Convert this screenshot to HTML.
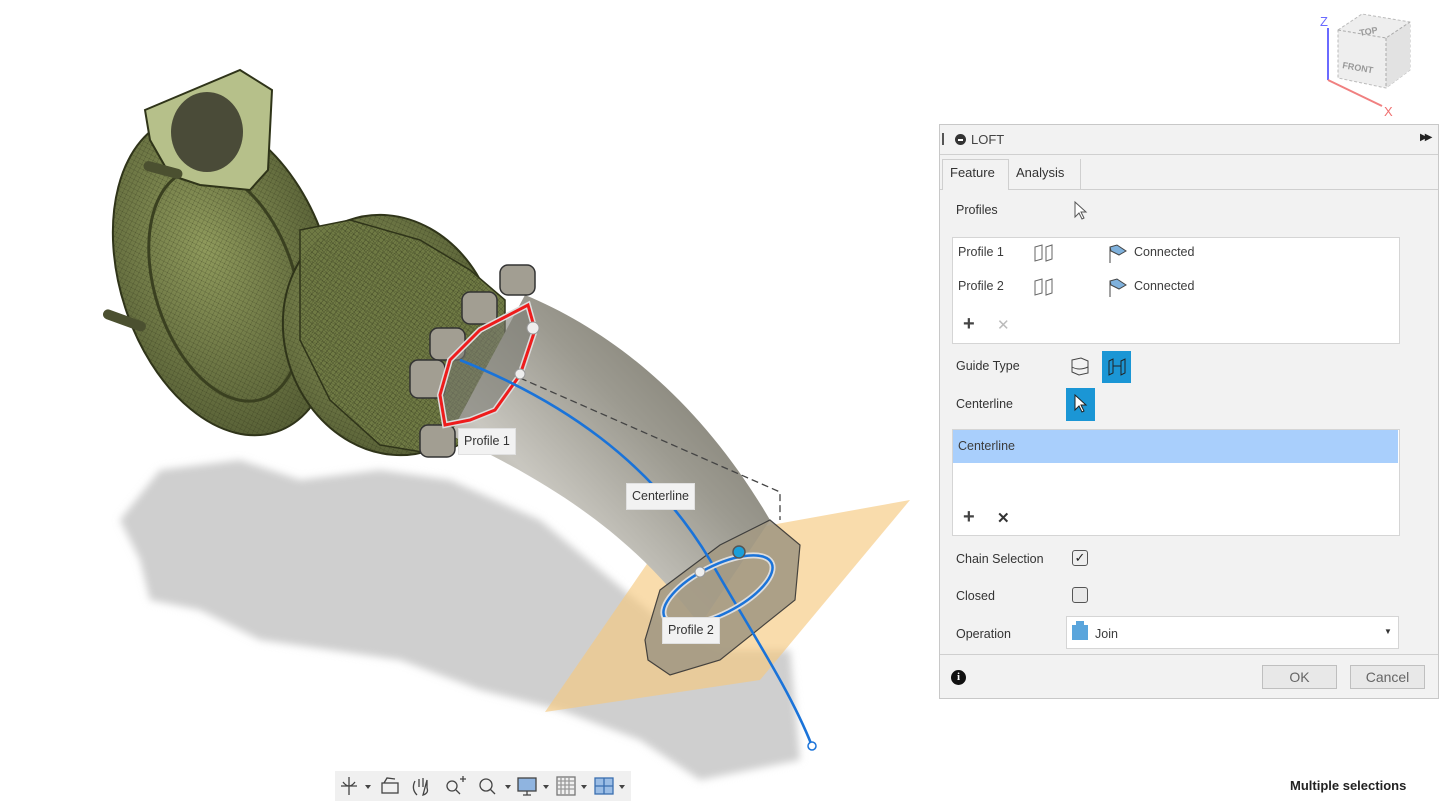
<!DOCTYPE html>
<html><head><style>
*{margin:0;padding:0;box-sizing:border-box}
body{width:1444px;height:803px;background:#fff;position:relative;overflow:hidden;font-family:"Liberation Sans",Arial,sans-serif;font-size:12.5px;color:#3c3c3c}
.abs{position:absolute}
.lbl{position:absolute;background:#f2f2f2;border:1px solid #e0e0e0;font-size:12.5px;color:#333;padding:5px 5px;line-height:15px}
#panel{position:absolute;left:939px;top:124px;width:500px;height:575px;background:#f2f2f2;border:1px solid #c8c8c8}
.row{position:absolute;left:16px;font-size:12.5px;color:#333}
.box{position:absolute;background:#fff;border:1px solid #d5d5d5}
.btn{position:absolute;border:1px solid #bfbfbf;background:#e8e8e8;font-size:14px;color:#666;text-align:center;line-height:22px}
.bl{position:absolute;background:#1b96d5;}
</style></head><body>
<svg class="abs" style="left:0;top:0" width="940" height="803" viewBox="0 0 940 803">
<defs>
<linearGradient id="pg" x1="0" y1="1" x2="1" y2="0">
<stop offset="0" stop-color="#7a776a"/><stop offset="0.35" stop-color="#c9c7c0"/><stop offset="0.6" stop-color="#9c9a90"/><stop offset="1" stop-color="#6a675b"/>
</linearGradient>
<radialGradient id="tg" cx="0.45" cy="0.4" r="0.7"><stop offset="0" stop-color="#8f9a5c"/><stop offset="1" stop-color="#4f5730"/></radialGradient>
<pattern id="mesh" width="6" height="6" patternUnits="userSpaceOnUse"><path d="M0 6 L6 0 M0 0 L6 6" stroke="#2f3419" stroke-width="0.5" opacity="0.5"/></pattern>
<filter id="bl"><feGaussianBlur stdDeviation="4"/></filter>
</defs>
<!-- shadow -->
<path d="M120 520 L160 470 L240 460 L300 480 L380 470 L450 480 L540 520 L600 570 L660 620 L720 650 L790 650 L800 760 L700 780 L640 740 L560 710 L480 690 L400 660 L330 650 L260 640 L200 610 L150 600 L140 560Z" fill="#cfcfcf" filter="url(#bl)"/>
<!-- orange plane -->
<path d="M545 712 L660 545 L910 500 L760 680Z" fill="#f6c980" opacity="0.65"/>
<!-- turbo -->
<ellipse cx="225" cy="275" rx="105" ry="165" transform="rotate(-18 225 275)" fill="url(#tg)" stroke="#2f3419" stroke-width="2"/>
<ellipse cx="225" cy="275" rx="105" ry="165" transform="rotate(-18 225 275)" fill="url(#mesh)"/>
<ellipse cx="225" cy="285" rx="70" ry="120" transform="rotate(-18 225 285)" fill="none" stroke="#3a4020" stroke-width="3"/>
<ellipse cx="390" cy="335" rx="105" ry="122" transform="rotate(-20 390 335)" fill="url(#tg)" stroke="#2f3419" stroke-width="2"/>
<path d="M300 230 L350 220 L420 240 L470 270 L505 300 L505 420 L440 455 L380 445 L330 400 L300 340Z" fill="#6f7a44" stroke="#2f3419" stroke-width="1.5"/>
<path d="M300 230 L350 220 L420 240 L470 270 L505 300 L505 420 L440 455 L380 445 L330 400 L300 340Z" fill="url(#mesh)"/>
<ellipse cx="390" cy="335" rx="105" ry="122" transform="rotate(-20 390 335)" fill="url(#mesh)"/>
<path d="M145 110 L240 70 L272 90 L268 170 L250 190 L200 185 L170 175 L150 140Z" fill="#b6c08a" stroke="#2f3419" stroke-width="2"/>
<ellipse cx="207" cy="132" rx="36" ry="40" fill="#4a4b38"/>
<rect x="105" y="308" width="45" height="10" rx="5" fill="#4b5030" transform="rotate(20 105 308)"/>
<rect x="145" y="160" width="40" height="10" rx="5" fill="#4b5030" transform="rotate(15 145 160)"/>
<!-- pipe -->
<path d="M525 295 C610 330 700 400 770 520 L700 625 C650 560 590 500 450 435 Z" fill="url(#pg)"/>
<!-- flange bosses -->
<g fill="#a29e92" stroke="#333" stroke-width="1.5">
<rect x="500" y="265" width="35" height="30" rx="8"/>
<rect x="462" y="292" width="35" height="32" rx="8"/>
<rect x="430" y="328" width="35" height="32" rx="8"/>
<rect x="410" y="360" width="35" height="38" rx="8"/>
<rect x="420" y="425" width="35" height="32" rx="8"/>
</g>
<!-- flange 2 -->
<path d="M645 640 L660 590 L720 545 L770 520 L800 545 L795 600 L720 660 L670 675 L648 660Z" fill="#a49a84" stroke="#333" stroke-width="1.2" opacity="0.9"/>
<!-- profile1 -->
<path d="M528 305 L535 330 L520 375 L495 410 L470 420 L445 425 L440 395 L450 360 L480 330Z" fill="#7a7a72" fill-opacity="0.6" stroke="#ddd" stroke-width="6"/>
<path d="M528 305 L535 330 L520 375 L495 410 L470 420 L445 425 L440 395 L450 360 L480 330Z" fill="none" stroke="#ee1c1c" stroke-width="3"/>
<!-- dashed -->
<path d="M520 378 L780 492 L780 520" fill="none" stroke="#444" stroke-width="1.3" stroke-dasharray="7 4"/>
<!-- centerline -->
<path d="M460 360 C560 400 650 460 710 560 C750 630 790 690 812 746" fill="none" stroke="#1a73d9" stroke-width="2.6"/>
<circle cx="812" cy="746" r="4" fill="#fff" stroke="#1a73d9" stroke-width="1.5"/>
<!-- profile2 -->
<ellipse cx="718" cy="590" rx="60" ry="24" transform="rotate(-27 718 590)" fill="none" stroke="#ddd" stroke-width="6"/>
<ellipse cx="718" cy="590" rx="60" ry="24" transform="rotate(-27 718 590)" fill="none" stroke="#1a73d9" stroke-width="2.5"/>
<circle cx="739" cy="552" r="6" fill="#1a9fd9" stroke="#555" stroke-width="1.5"/>
<circle cx="700" cy="572" r="5" fill="#eee" stroke="#999"/>
<circle cx="533" cy="328" r="6" fill="#eee" stroke="#999"/>
<circle cx="520" cy="374" r="5" fill="#eee" stroke="#999"/>
</svg>
<div class="lbl" style="left:458px;top:428px">Profile 1</div>
<div class="lbl" style="left:626px;top:483px">Centerline</div>
<div class="lbl" style="left:662px;top:617px">Profile 2</div>

<!-- viewcube -->
<svg class="abs" style="left:1310px;top:8px" width="120" height="112">
<path d="M28 22 L52 6 L100 14 L100 62 L76 80 L28 70Z" fill="#eee" stroke="#bbb" stroke-dasharray="3 2"/>
<path d="M76 30 L100 14 L100 62 L76 80Z" fill="#e2e2e2"/>
<path d="M28 22 L76 30 L100 14 M76 30 L76 80" fill="none" stroke="#aaa" stroke-dasharray="3 2"/>
<text x="50" y="28" font-size="9" fill="#999" font-family="Liberation Sans" font-weight="bold" transform="rotate(-10 50 28)">TOP</text>
<text x="32" y="60" font-size="9" fill="#999" font-family="Liberation Sans" font-weight="bold" transform="rotate(10 32 60)">FRONT</text>
<path d="M18 20 L18 72" stroke="#6a6aff" stroke-width="2"/>
<path d="M18 72 L72 98" stroke="#f08080" stroke-width="2"/>
<text x="10" y="18" font-size="13" fill="#6a6aff" font-family="Liberation Sans">Z</text>
<text x="74" y="108" font-size="13" fill="#f07070" font-family="Liberation Sans">X</text>
</svg>

<!-- toolbar -->
<div class="abs" style="left:335px;top:771px;width:296px;height:30px;background:#f0f0f0"></div>
<svg class="abs" style="left:335px;top:771px" width="296" height="30" font-family="Liberation Sans">
<g stroke="#444" fill="none" stroke-width="1.3">
<path d="M14 6 V24 M6 15 H22 M8 11 Q14 19 20 11"/>
<rect x="47" y="12" width="16" height="10"/><path d="M49 12 L52 7 L60 8"/>
<path d="M82 24 Q76 18 80 10 M84 8 V16 M88 7 V16 M92 9 V17 Q94 22 88 24Z"/>
<circle cx="117" cy="15" r="5"/><path d="M121 19 L125 23 M125 8 H131 M128 5 V11"/>
<circle cx="151" cy="14" r="6"/><path d="M155 18 L160 23"/>
<rect x="183" y="7" width="18" height="13" fill="#8fb4e0"/><path d="M188 24 H196 M192 20 V24"/>
<rect x="222" y="6" width="18" height="18" stroke="#777"/><path d="M226 6 V24 M230 6 V24 M234 6 V24 M222 10 H240 M222 14 H240 M222 18 H240" stroke="#999"/>
<rect x="260" y="7" width="18" height="16" stroke="#3b6fb0" fill="#9bbde5"/><path d="M269 7 V23 M260 15 H278" stroke="#3b6fb0"/>
</g>
<g fill="#444"><path d="M30 14 h6 l-3 4z M170 14 h6 l-3 4z M208 14 h6 l-3 4z M246 14 h6 l-3 4z M284 14 h6 l-3 4z"/></g>
</svg>
<div class="abs" style="left:1290px;top:778px;font-size:13px;font-weight:bold;color:#222">Multiple selections</div>

<!-- panel -->
<div id="panel">
<div class="abs" style="left:0;top:0;width:498px;height:30px;border-bottom:1px solid #d0d0d0"></div>
<div class="abs" style="left:2px;top:8px;width:2px;height:12px;background:#555"></div>
<div class="abs" style="left:15px;top:9px;width:11px;height:11px;border-radius:50%;background:#333"></div>
<div class="abs" style="left:18px;top:14px;width:5px;height:1.5px;background:#fff"></div>
<div class="abs" style="left:31px;top:7px;font-size:13px;color:#444">LOFT</div>
<div class="abs" style="left:480px;top:7px;font-size:10px;color:#222;letter-spacing:-3px">▶▶</div>
<div class="abs" style="left:0;top:64px;width:498px;height:1px;background:#cfcfcf"></div>
<div class="abs" style="left:2px;top:34px;width:67px;height:31px;border:1px solid #cfcfcf;border-bottom:none;background:#f2f2f2"></div>
<div class="abs" style="left:10px;top:40px;font-size:13px;color:#333">Feature</div>
<div class="abs" style="left:76px;top:40px;font-size:13px;color:#333">Analysis</div>
<div class="abs" style="left:140px;top:34px;width:1px;height:30px;background:#cfcfcf"></div>
<div class="row" style="top:78px">Profiles</div>
<svg class="abs" style="left:133px;top:75px" width="16" height="22"><path d="M2 2 L2 17 L6 13 L9 19 L11 18 L8 12 L13 12Z" fill="#fff" stroke="#555"/></svg>
<div class="box" style="left:12px;top:112px;width:448px;height:107px"></div>
<div class="abs" style="left:18px;top:120px">Profile 1</div>
<div class="abs" style="left:18px;top:154px">Profile 2</div>
<svg class="abs" style="left:92px;top:118px" width="24" height="56" fill="none" stroke="#666"><path d="M3 4 L10 2 V16 L3 18Z M14 4 L20 2 V16 L14 18Z"/><path d="M3 38 L10 36 V50 L3 52Z M14 38 L20 36 V50 L14 52Z"/></svg>
<svg class="abs" style="left:167px;top:118px" width="22" height="56"><path d="M3 4 L10 2 L19 8 L12 12 L4 8Z M3 4 V20" fill="#7fb1dc" stroke="#444"/><path d="M3 38 L10 36 L19 42 L12 46 L4 42Z M3 38 V54" fill="#7fb1dc" stroke="#444"/></svg>
<div class="abs" style="left:194px;top:120px">Connected</div>
<div class="abs" style="left:194px;top:154px">Connected</div>
<div class="abs" style="left:23px;top:188px;font-size:20px;color:#444;font-weight:bold">+</div>
<div class="abs" style="left:57px;top:191px;font-size:15px;color:#bbb">✕</div>
<div class="row" style="top:234px">Guide Type</div>
<svg class="abs" style="left:129px;top:230px" width="22" height="22" fill="none" stroke="#444"><path d="M3 5 L12 3 L19 6 L19 18 L10 20 L3 17Z M3 12 Q10 16 19 12"/></svg>
<div class="bl" style="left:162px;top:226px;width:29px;height:32px"></div>
<svg class="abs" style="left:166px;top:232px" width="22" height="20" fill="none" stroke="#222"><path d="M3 4 L7 2 V16 L3 18Z M15 4 L19 2 V16 L15 18Z M7 9 H15"/></svg>
<div class="row" style="top:272px">Centerline</div>
<div class="bl" style="left:126px;top:263px;width:29px;height:33px"></div>
<svg class="abs" style="left:133px;top:268px" width="16" height="22"><path d="M2 2 L2 17 L6 13 L9 19 L11 18 L8 12 L13 12Z" fill="#fff" stroke="#222"/></svg>
<div class="box" style="left:12px;top:304px;width:448px;height:107px"></div>
<div class="abs" style="left:13px;top:305px;width:445px;height:33px;background:#a9cffc"></div>
<div class="abs" style="left:18px;top:314px">Centerline</div>
<div class="abs" style="left:23px;top:381px;font-size:20px;color:#444;font-weight:bold">+</div>
<div class="abs" style="left:57px;top:384px;font-size:15px;color:#333;font-weight:bold">✕</div>
<div class="row" style="top:427px">Chain Selection</div>
<div class="abs" style="left:132px;top:425px;width:16px;height:16px;border:1px solid #555;border-radius:3px;background:#eee;font-size:13px;line-height:14px;text-align:center;color:#222">✓</div>
<div class="row" style="top:464px">Closed</div>
<div class="abs" style="left:132px;top:462px;width:16px;height:16px;border:1px solid #555;border-radius:3px;background:#e8e8e8"></div>
<div class="row" style="top:502px">Operation</div>
<div class="box" style="left:126px;top:491px;width:333px;height:33px"></div>
<div class="abs" style="left:132px;top:500px;width:16px;height:15px;background:#5aa5dc"></div>
<div class="abs" style="left:136px;top:496px;width:8px;height:6px;background:#5aa5dc"></div>
<div class="abs" style="left:155px;top:502px">Join</div>
<div class="abs" style="left:444px;top:502px;font-size:8px;color:#333">▼</div>
<div class="abs" style="left:0;top:529px;width:498px;height:1px;background:#cfcfcf"></div>
<div class="abs" style="left:11px;top:545px;width:15px;height:15px;border-radius:50%;background:#111;color:#fff;font-size:11px;font-weight:bold;text-align:center;line-height:15px;font-family:'Liberation Serif',serif">i</div>
<div class="btn" style="left:322px;top:540px;width:75px;height:24px">OK</div>
<div class="btn" style="left:410px;top:540px;width:75px;height:24px">Cancel</div>
</div>
</body></html>
